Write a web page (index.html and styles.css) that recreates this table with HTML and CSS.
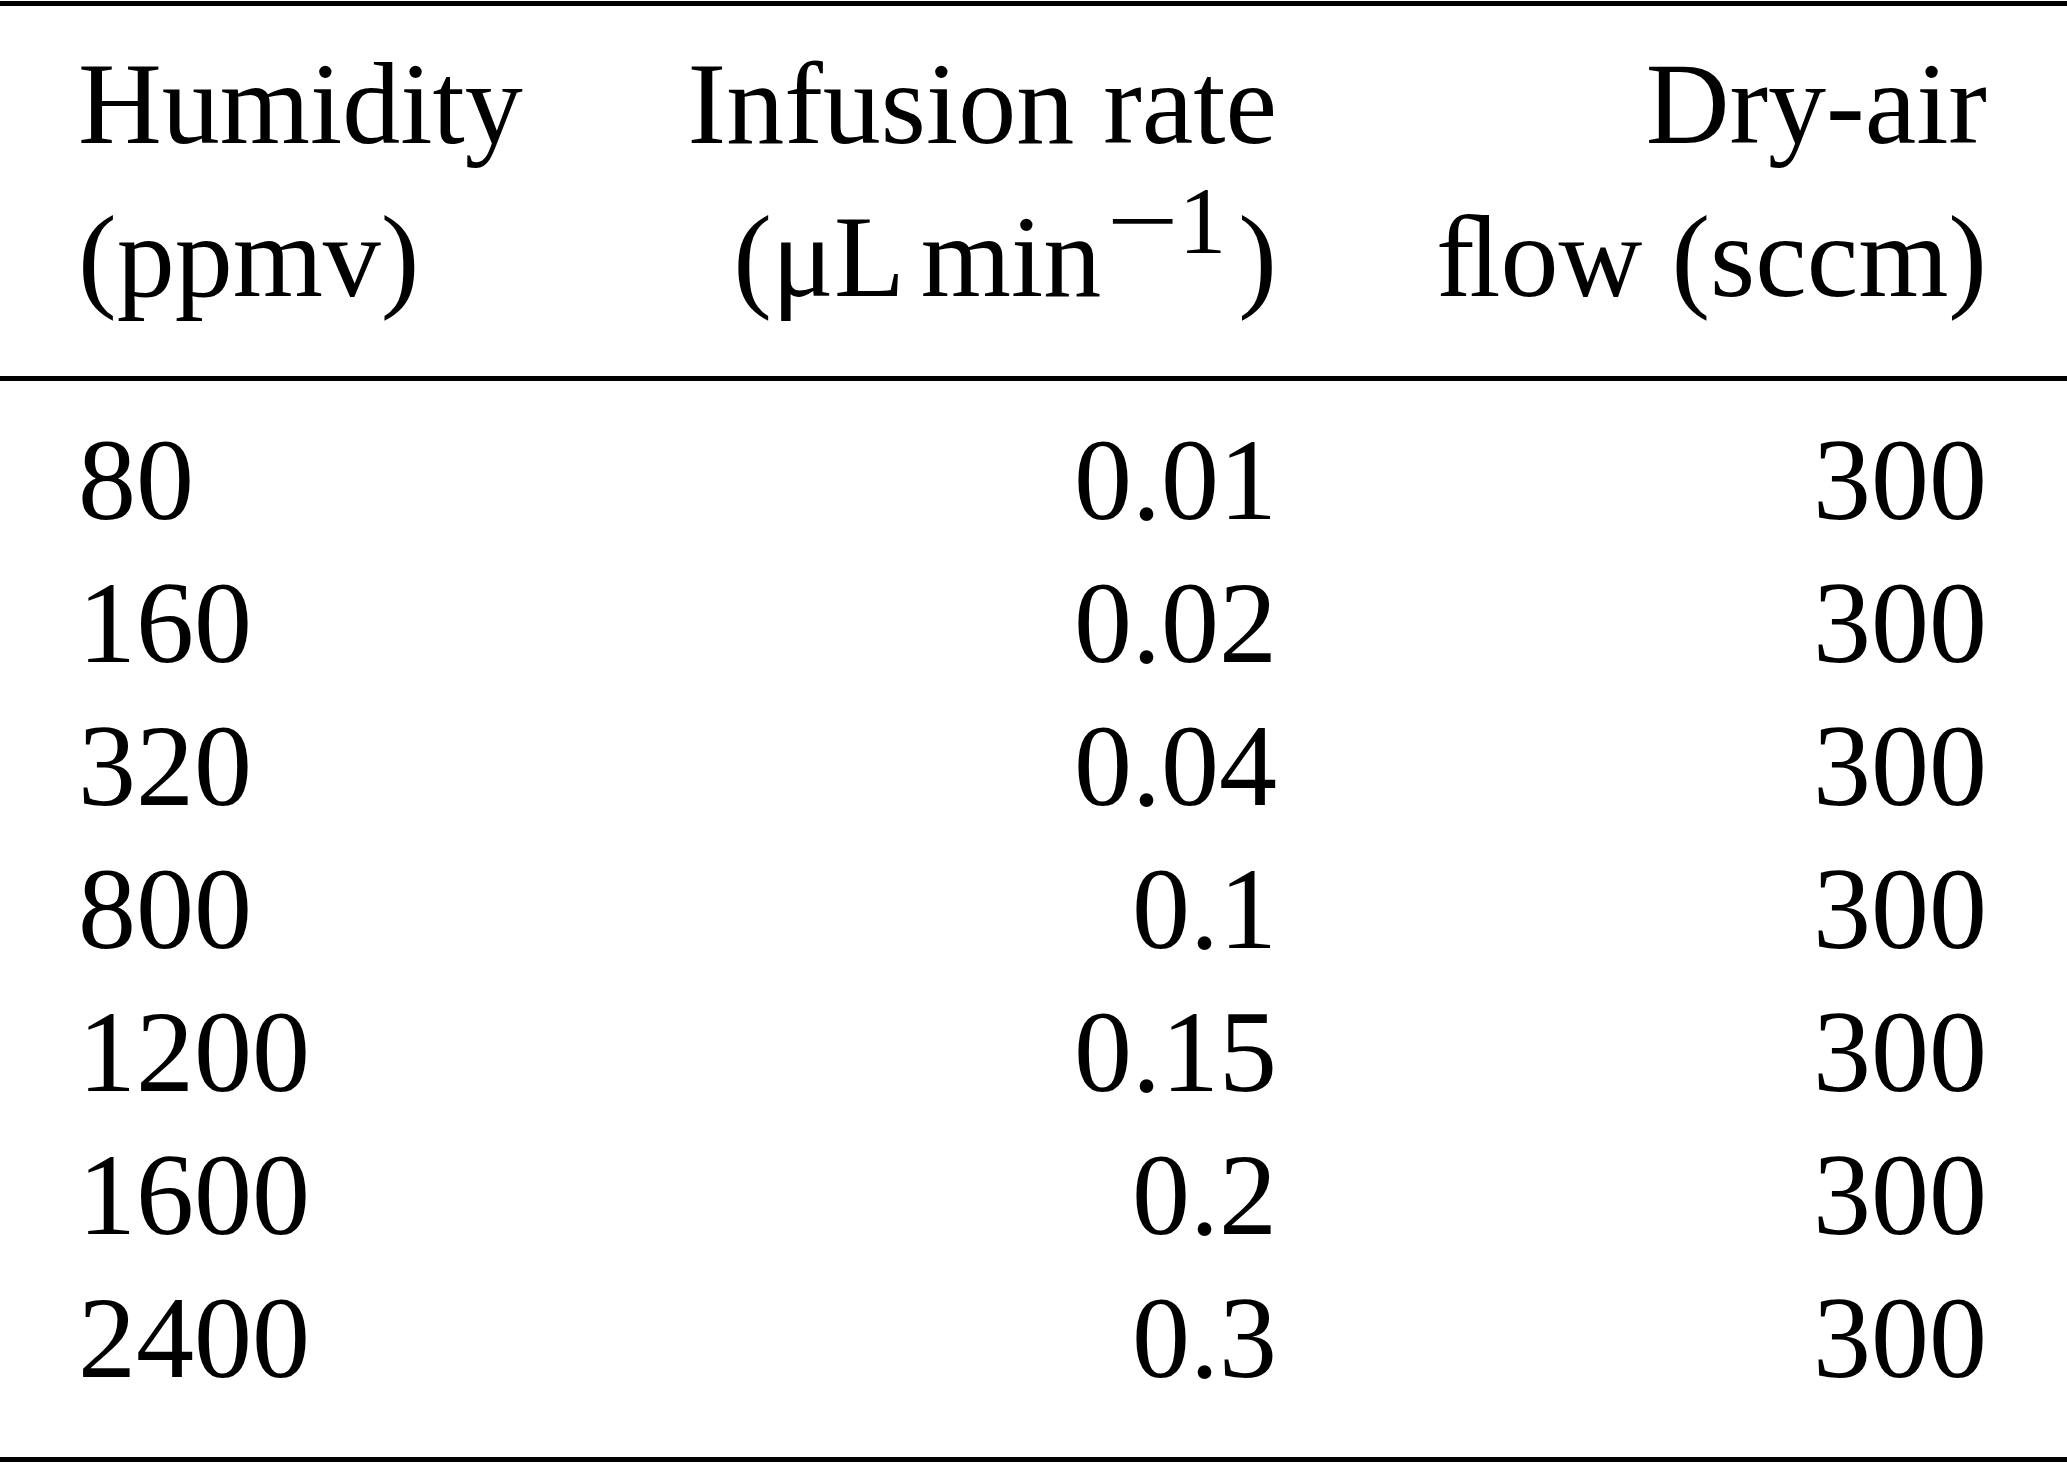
FILE: index.html
```html
<!DOCTYPE html>
<html lang="en">
<head>
<meta charset="utf-8">
<title>Humidity table</title>
<link rel="stylesheet" href="styles.css">
</head>
<body>
<div class="table">
  <div class="thead">
    <div class="cell left">Humidity</div>
    <div class="cell right">Infusion rate</div>
    <div class="cell right">Dry-air</div>
    <div class="cell left">(ppmv)</div>
    <div class="cell right">(μL<span class="thin"></span>min<sup class="sup"><span class="minus">−</span>1</sup>)</div>
    <div class="cell right">ﬂow (sccm)</div>
  </div>
  <div class="tbody">
    <div class="cell left">80</div><div class="cell right">0.01</div><div class="cell right">300</div>
    <div class="cell left">160</div><div class="cell right">0.02</div><div class="cell right">300</div>
    <div class="cell left">320</div><div class="cell right">0.04</div><div class="cell right">300</div>
    <div class="cell left">800</div><div class="cell right">0.1</div><div class="cell right">300</div>
    <div class="cell left">1200</div><div class="cell right">0.15</div><div class="cell right">300</div>
    <div class="cell left">1600</div><div class="cell right">0.2</div><div class="cell right">300</div>
    <div class="cell left">2400</div><div class="cell right">0.3</div><div class="cell right">300</div>
  </div>
</div>
</body>
</html>
```
FILE: styles.css
```css
html, body {
  margin: 0;
  padding: 0;
  background: #ffffff;
}

body {
  width: 2067px;
  height: 1463px;
  overflow: hidden;
}

.table {
  margin-top: 1px;
  width: 2067px;
  border-top: 5px solid #000;
  border-bottom: 5px solid #000;
  font-family: "Liberation Serif", "Times New Roman", serif;
  font-size: 116px;
  color: #000;
}

.thead,
.tbody {
  display: grid;
  grid-template-columns: 606px 751px 710px;
}

.thead {
  padding: 22px 0 42px;
  border-bottom: 5px solid #000;
  line-height: 153px;
}

.tbody {
  padding: 28px 0 47px;
  line-height: 143px;
}

.cell {
  white-space: nowrap;
}

.left {
  text-align: left;
  padding-left: 78px;
}

.right {
  text-align: right;
  padding-right: 80px;
}

.thin {
  display: inline-block;
  width: 16px;
}

.sup {
  font-size: 95px;
  line-height: 0;
  vertical-align: baseline;
  position: relative;
  top: -43px;
  margin-left: 6px;
  margin-right: 12px;
}

.minus {
  display: inline-block;
  transform: scaleX(1.35);
  margin: 0 9px 0 9px;
}
```
